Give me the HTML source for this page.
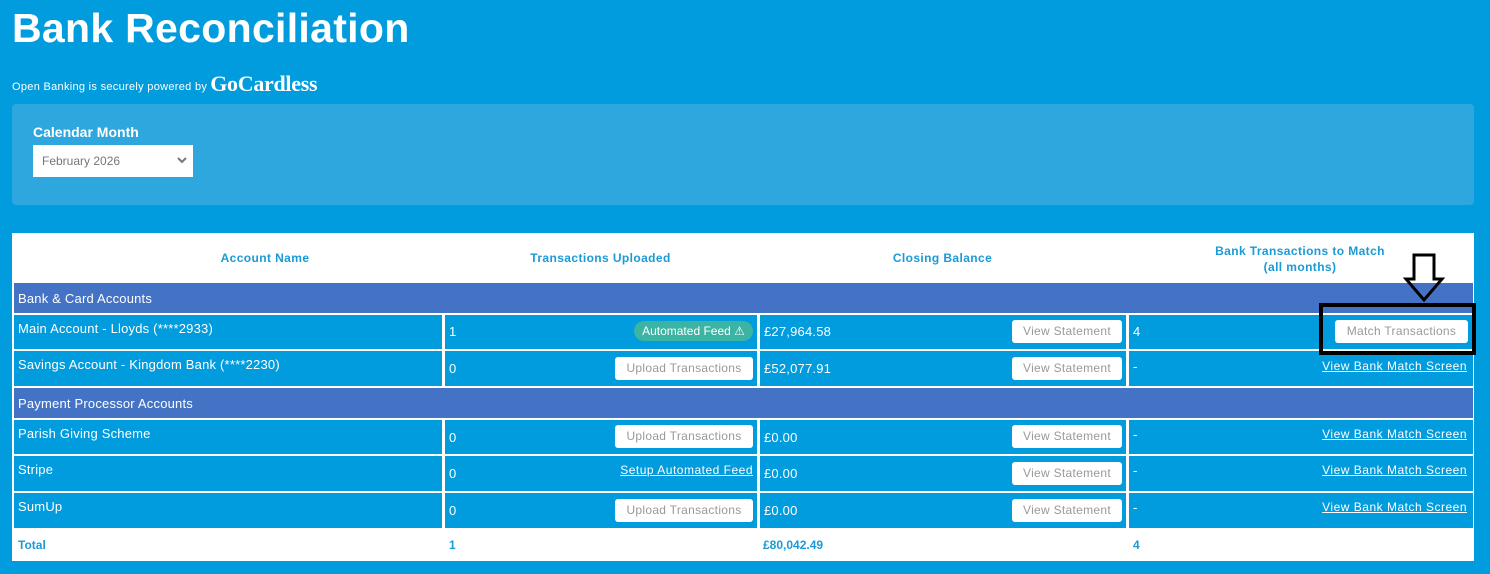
<!DOCTYPE html>
<html><head><style>
*{margin:0;padding:0;box-sizing:border-box}
body{width:1490px;height:574px;background:#009cde;font-family:"Liberation Sans",sans-serif;position:relative;overflow:hidden;color:#fff}
.a{position:absolute}
h1{position:absolute;left:12px;top:5px;font-size:41px;font-weight:bold;letter-spacing:0.3px;color:#fff}
.cell{position:absolute;background:#009cde;font-size:13px;color:#fff;letter-spacing:0.2px}
.sec{position:absolute;background:#4472c4;font-size:13px;left:14px;width:1459px;height:30px;padding:8px 4px;letter-spacing:0.2px}
.btn{position:absolute;background:#fff;color:#999;font-size:12px;border-radius:3px;height:23px;line-height:23px;text-align:center;letter-spacing:0.3px}
.lnk{position:absolute;font-size:12px;color:#fff;text-decoration:underline;right:6px;letter-spacing:0.5px}
.hd{position:absolute;color:#1a9ad6;font-size:12px;font-weight:bold;text-align:center;letter-spacing:0.4px}
</style></head><body>
<h1>Bank Reconciliation</h1>
<div class="a" style="left:12px;top:71px;font-size:11px;white-space:nowrap"><span style="vertical-align:1px;letter-spacing:0.3px">Open Banking is securely powered by</span> <span style="font-family:'Liberation Serif',serif;font-weight:bold;font-size:22px;letter-spacing:-0.3px">GoCardless</span></div>
<div class="a" style="left:12px;top:104px;width:1462px;height:101px;background:#2ea7de;border-radius:4px"></div>
<div class="a" style="left:33px;top:124px;font-size:14px;font-weight:bold">Calendar Month</div>
<div class="a" style="left:33px;top:145px;width:160px;height:32px;background:#fff;color:#777;font-size:12px;padding:9px 9px">February 2026<svg style="position:absolute;right:6px;top:12px" width="10" height="7"><path d="M1 1L5 5L9 1" stroke="#777" stroke-width="2" fill="none"/></svg></div>

<div class="a" style="left:12px;top:233px;width:1462px;height:328px;background:#fff"></div>
<div class="hd" style="left:115px;top:251px;width:300px">Account Name</div>
<div class="hd" style="left:443px;top:251px;width:315px">Transactions Uploaded</div>
<div class="hd" style="left:758px;top:251px;width:369px">Closing Balance</div>
<div class="hd" style="left:1127px;top:243px;width:346px;line-height:16px">Bank Transactions to Match<br>(all months)</div>

<div class="sec" style="top:283px">Bank &amp; Card Accounts</div>
<div class="sec" style="top:388px">Payment Processor Accounts</div>

<div class="cell" style="left:14px;top:315px;width:428px;height:34px;padding:6px 4px">Main Account - Lloyds (****2933)</div>
<div class="cell" style="left:445px;top:315px;width:312px;height:34px;padding:9px 4px">1</div>
<div class="a" style="left:634px;top:321px;width:119px;height:20px;border-radius:10px;background:#3cb4a4;font-size:12px;text-align:center;line-height:20px">Automated Feed ⚠</div>
<div class="cell" style="left:760px;top:315px;width:366px;height:34px;padding:9px 4px">£27,964.58</div>
<div class="btn" style="left:1012px;top:320px;width:110px">View Statement</div>
<div class="cell" style="left:1129px;top:315px;width:344px;height:34px;padding:9px 4px">4</div>
<div class="btn" style="left:1335px;top:320px;width:133px">Match Transactions</div>

<div class="cell" style="left:14px;top:351px;width:428px;height:35px;padding:6px 4px">Savings Account - Kingdom Bank (****2230)</div>
<div class="cell" style="left:445px;top:351px;width:312px;height:35px;padding:10px 4px">0</div>
<div class="btn" style="left:615px;top:357px;width:138px">Upload Transactions</div>
<div class="cell" style="left:760px;top:351px;width:366px;height:35px;padding:10px 4px">£52,077.91</div>
<div class="btn" style="left:1012px;top:357px;width:110px">View Statement</div>
<div class="cell" style="left:1129px;top:351px;width:344px;height:35px;padding:8px 4px">-<span class="lnk" style="top:8px">View Bank Match Screen</span></div>

<div class="cell" style="left:14px;top:420px;width:428px;height:34px;padding:6px 4px">Parish Giving Scheme</div>
<div class="cell" style="left:445px;top:420px;width:312px;height:34px;padding:10px 4px">0</div>
<div class="btn" style="left:615px;top:425px;width:138px">Upload Transactions</div>
<div class="cell" style="left:760px;top:420px;width:366px;height:34px;padding:10px 4px">£0.00</div>
<div class="btn" style="left:1012px;top:425px;width:110px">View Statement</div>
<div class="cell" style="left:1129px;top:420px;width:344px;height:34px;padding:7px 4px">-<span class="lnk" style="top:7px">View Bank Match Screen</span></div>

<div class="cell" style="left:14px;top:456px;width:428px;height:35px;padding:6px 4px">Stripe</div>
<div class="cell" style="left:445px;top:456px;width:312px;height:35px;padding:10px 4px">0<span class="lnk" style="top:7px;right:4px">Setup Automated Feed</span></div>
<div class="cell" style="left:760px;top:456px;width:366px;height:35px;padding:10px 4px">£0.00</div>
<div class="btn" style="left:1012px;top:462px;width:110px">View Statement</div>
<div class="cell" style="left:1129px;top:456px;width:344px;height:35px;padding:7px 4px">-<span class="lnk" style="top:7px">View Bank Match Screen</span></div>

<div class="cell" style="left:14px;top:493px;width:428px;height:35px;padding:6px 4px">SumUp</div>
<div class="cell" style="left:445px;top:493px;width:312px;height:35px;padding:10px 4px">0</div>
<div class="btn" style="left:615px;top:499px;width:138px">Upload Transactions</div>
<div class="cell" style="left:760px;top:493px;width:366px;height:35px;padding:10px 4px">£0.00</div>
<div class="btn" style="left:1012px;top:499px;width:110px">View Statement</div>
<div class="cell" style="left:1129px;top:493px;width:344px;height:35px;padding:7px 4px">-<span class="lnk" style="top:7px">View Bank Match Screen</span></div>

<div class="a" style="left:18px;top:538px;font-size:12px;font-weight:bold;color:#1a9ad6">Total</div>
<div class="a" style="left:449px;top:538px;font-size:12px;font-weight:bold;color:#1a9ad6">1</div>
<div class="a" style="left:763px;top:538px;font-size:12px;font-weight:bold;color:#1a9ad6">£80,042.49</div>
<div class="a" style="left:1133px;top:538px;font-size:12px;font-weight:bold;color:#1a9ad6">4</div>

<svg class="a" style="left:0;top:0" width="1490" height="574">
<rect x="1321" y="305" width="153" height="48" fill="none" stroke="#000" stroke-width="4"/>
<path d="M1414 255H1434V279H1442L1424 300L1406 279H1414Z" fill="none" stroke="#000" stroke-width="3"/>
</svg>
</body></html>
